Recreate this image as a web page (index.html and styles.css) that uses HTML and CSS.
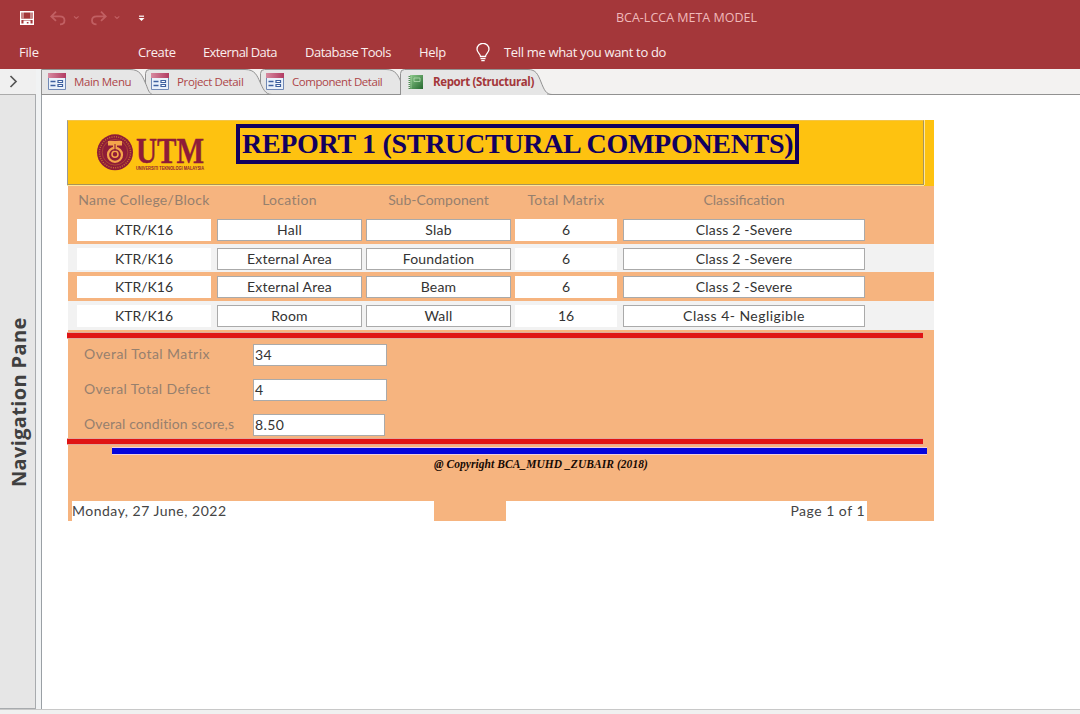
FILE: index.html
```html
<!DOCTYPE html>
<html lang="en">
<head>
<meta charset="utf-8">
<title>BCA-LCCA META MODEL</title>
<link rel="stylesheet" href="styles.css">
</head>
<body>
<header class="ribbon">
  <div class="titlebar">
    <svg class="quick" width="160" height="36" viewBox="0 0 160 36" fill="none">
      <path d="M20.700 11.700h12.600v12.600H20.700z" stroke="#fff" stroke-width="1.400"/>
      <path d="M21 18.700h12v1.300H21z" fill="#fff"/><path d="M23 11.500v7M31 11.500v7" stroke="#fff" stroke-width=".8"/>
      <path d="M23.500 20.500h7v4h-2v-2.500h-1.700v2.500h-3.300z" fill="#fff"/>
      <g stroke="#c15f62" stroke-width="1.800">
        <path d="M56 11.700l-4.700 4.700 4.700 4.500M51.500 16.400h8.200c3 0 4.800 1.600 4.800 4s-1.800 3.900-4.500 3.900"/>
        <path d="M101 11.700l4.700 4.700-4.700 4.500M105.500 16.400h-8.700c-3 0-4.800 1.600-4.800 4s1.800 3.900 4.500 3.900"/>
        <path d="M74 16.300l2.300 2.200 2.300-2.200M114.700 16.300l2.300 2.200 2.300-2.200" stroke-width="1.100"/>
      </g>
      <path d="M139 16.200h5" stroke="#fff" stroke-width="1.200"/><path d="M138.500 18h6l-3 3z" fill="#fff"/>
    </svg>
    <span class="apptitle">BCA-LCCA META MODEL</span>
  </div>
  <nav class="menu">
    <span class="m-file">File</span>
    <span class="m-create">Create</span>
    <span class="m-ext">External Data</span>
    <span class="m-db">Database Tools</span>
    <span class="m-help">Help</span>
    <svg class="bulb" width="14" height="19" viewBox="0 0 14 19" fill="none" stroke="#fff" stroke-width="1.300">
      <path d="M4.500 13.500c0-2.600-3.500-3.800-3.500-7.200a6 6 0 0 1 12 0c0 3.400-3.500 4.600-3.500 7.200zM4.500 15.600h5M5.300 17.600h3.400"/>
    </svg>
    <span class="m-tell">Tell me what you want to do</span>
  </nav>
</header>

<div class="workspace">
  <aside class="navpane">
    <div class="navhead">
      <svg width="9" height="13" viewBox="0 0 9 13" fill="none" stroke="#555" stroke-width="1.700"><path d="M1.500 1l5.500 5.500L1.500 12"/></svg>
    </div>
    <div class="navlabel"><span>Navigation Pane</span></div>
  </aside>
  <main class="document">
    <div class="tabs">
      <svg class="tabshape" width="1039" height="26" viewBox="0 0 1039 26">
        <path d="M0 26V0h1039v26" fill="#f3f2f1"/>
        <g fill="#e6e6e6" stroke="#919191">
          <path d="M219.500 21V4.500q0-4 4-4H345c10 0 12 6 15 12.500s5 12.500 12 12.500H224q-4.500 0-4.500-4.500z"/>
          <path d="M104.500 21V4.500q0-4 4-4H204c10 0 12 6 15 12.500s5 12.500 12 12.500H109q-4.500 0-4.500-4.500z"/>
          <path d="M.5 25.500V.500H89c10 0 12 6 15 12.500s3 10 7 12.500z"/>
          <path d="M0 25.500h1039" fill="none"/>
          <path d="M359.500 26V4.500q0-4 4-4H487c8 0 10 5 13 12.500s5 12.500 11 12.500"/>
        </g>
        <path d="M360 25h146v1H360z" fill="#e6e6e6"/>
      </svg>
      <svg width="0" height="0" class="defs"><defs>
        <linearGradient id="pink" x2="1"><stop stop-color="#d78aa0"/><stop offset="1" stop-color="#b23b62"/></linearGradient>
        <linearGradient id="green" x2="1" y2="1"><stop stop-color="#8cc98a"/><stop offset="1" stop-color="#25692f"/></linearGradient>
        <symbol id="form" viewBox="0 0 18 17">
          <path d="M.5.500h17v16H.500z" fill="#eaf1fa" stroke="#7189b5"/><path d="M0 0h18v5H0z" fill="url(#pink)"/>
          <path d="M2.500 8.500h5M2.500 12.500h5" stroke="#3e609f" stroke-width="1.300"/>
          <path d="M10 7.500h4.500v2H10zM10 11.500h4.500v2H10z" fill="#fff" stroke="#3e609f" stroke-width="1.200"/>
        </symbol>
      </defs></svg>
      <div class="tab t1"><svg width="18" height="17"><use href="#form"/></svg><span>Main Menu</span></div>
      <div class="tab t2"><svg width="18" height="17"><use href="#form"/></svg><span>Project Detail</span></div>
      <div class="tab t3"><svg width="18" height="17"><use href="#form"/></svg><span>Component Detail</span></div>
      <div class="tab t4"><svg width="15" height="15" viewBox="0 0 15 15"><path d="M2 0h13v14H2z" fill="url(#green)"/><path d="M6 3h6v3.500H6z" fill="none" stroke="#b5dcb2" stroke-width=".8"/><path d="M1.500 1v13" stroke="#4c8b50" stroke-width="2" stroke-dasharray="1 1"/><path d="M3 .500v13" stroke="#b9dfb5" stroke-width=".6"/></svg><span>Report (Structural)</span></div>
    </div>

    <div class="canvas">
      <article class="report">
        <div class="banner">
          <div class="frame">
            <svg class="logo" width="110" height="42" viewBox="0 0 110 42">
              <circle cx="18" cy="18.300" r="18" fill="#8e1c38"/>
              <circle cx="18" cy="18.300" r="15.500" fill="none" stroke="#c4702f" stroke-width="1.500" stroke-dasharray="1 1.300"/>
              <circle cx="18" cy="18.300" r="12.800" fill="none" stroke="#c4702f" stroke-width=".5"/>
              <path d="M11 7h14v4.500h-5V15h-4v-3.500h-5z" fill="#f5a54b"/>
              <circle cx="18" cy="20.800" r="7" fill="none" stroke="#f5a54b" stroke-width="2.200"/>
              <circle cx="18" cy="20.300" r="3" fill="none" stroke="#f5a54b" stroke-width="1.600"/>
              <path d="M18 10v7" stroke="#8e1c38"/>
              <text class="utm" x="39" y="29" textLength="68" lengthAdjust="spacingAndGlyphs">UTM</text>
              <text class="utmsub" x="39" y="35.500" textLength="68" lengthAdjust="spacingAndGlyphs">UNIVERSITI TEKNOLOGI MALAYSIA</text>
            </svg>
            <h1><span>REPORT 1 (STRUCTURAL COMPONENTS)</span></h1>
          </div>
        </div>
        <div class="row heads"><span class="h1st">Name College/Block</span><span>Location</span><span class="tight">Sub-Component</span><span class="h4th">Total Matrix</span><span class="tight">Classification</span></div>
        <div class="row data"><span class="flat">KTR/K16</span><span>Hall</span><span>Slab</span><span class="flat">6</span><span>Class 2 -Severe</span></div>
        <div class="row data alt"><span class="flat">KTR/K16</span><span>External Area</span><span>Foundation</span><span class="flat">6</span><span>Class 2 -Severe</span></div>
        <div class="row data"><span class="flat">KTR/K16</span><span>External Area</span><span>Beam</span><span class="flat">6</span><span>Class 2 -Severe</span></div>
        <div class="row data alt"><span class="flat">KTR/K16</span><span>Room</span><span>Wall</span><span class="flat">16</span><span class="wide">Class 4- Negligible</span></div>
        <div class="rule red first"></div>
        <div class="totals">
          <span class="l1">Overal Total Matrix</span><b>34</b>
          <span class="l2">Overal Total Defect</span><b>4</b>
          <span class="l3">Overal condition score,s</span><b class="short">8.50</b>
        </div>
        <div class="rule red"></div>
        <div class="rule blue"></div>
        <p class="copyright"><span>@ Copyright BCA_MUHD _ZUBAIR (2018)</span></p>
        <footer class="pagefoot"><span class="date">Monday, 27 June, 2022</span><span class="page">Page 1 of 1</span></footer>
      </article>
    </div>
  </main>
</div>
<div class="statusbar"></div>
</body>
</html>
```
FILE: styles.css
```css
* { box-sizing: border-box; }
body { margin: 0; width: 1080px; height: 714px; overflow: hidden; display: flex; flex-direction: column; background: #fff; font-family: "Open Sans", "Noto Sans", sans-serif; }
span { white-space: nowrap; }

.ribbon { height: 69px; background: #a4373a; color: #fbeeee; flex: none; }
.titlebar { height: 36px; display: flex; }
.quick { margin-right: 456px; flex: none; }
.apptitle { font-size: 12.5px; line-height: 36px; color: #f0b9ba; letter-spacing: 0; }
.menu { height: 33px; display: flex; font-size: 13px; line-height: 33px; padding-left: 19px; }
.m-file { width: 119px; letter-spacing: -.2px; }
.m-create { width: 65px; letter-spacing: -.4px; }
.m-ext { width: 102px; letter-spacing: -.6px; }
.m-db { width: 114px; letter-spacing: -.5px; }
.m-help { width: 57px; letter-spacing: -.3px; }
.bulb { margin: 7px 14px 0 0; }
.m-tell { letter-spacing: -.33px; }

.workspace { height: 640px; flex: none; display: flex; background: #f1f3f4; }
.navpane { width: 36px; border-right: 1px solid #a8abae; border-bottom: 1px solid #a8abae; background: #e6e6e6; display: flex; flex-direction: column; }
.navhead { height: 26px; background: #f0f0f0; border-bottom: 1px solid #ababab; padding: 6px 0 0 9px; flex: none; margin-right: -1px; }
.navhead svg { display: block; }
.navlabel { flex: 1; display: flex; padding: 217px 0 0 4px; }
.navlabel span { writing-mode: vertical-rl; transform: rotate(180deg); height: 175px; width: 30px; line-height: 30px; font-size: 20px; font-weight: 700; color: #404040; letter-spacing: .35px; }
.document { margin-left: 5px; width: 1039px; border-left: 1px solid #9aa0a5; background: #fff; }
.tabs { height: 26px; display: flex; position: relative; margin-left: -1px; }
.tabshape { position: absolute; left: 0; top: 0; }
.defs { position: absolute; }
.tab { position: relative; display: flex; align-items: flex-start; color: #ad4548; font-size: 11.5px; line-height: 26px; padding-left: 7px; letter-spacing: -.37px; }
.tab svg { margin: 4px 8px 0 0; flex: none; }
.t1 { width: 103px; }
.t2 { width: 115px; }
.t3 { width: 142px; letter-spacing: -.45px; }
.t4 { font-weight: 700; color: #a4373a; }
.t4 svg { margin: 6px 10px 0 0; }

.canvas { padding: 25px 0 0 25px; }
.report { width: 867px; height: 401px; background: linear-gradient(90deg, #fff 1px, #f6b47f 1px); font-family: Lato, "Open Sans", sans-serif; }
.banner { height: 66px; background: #fec210; }
.frame { width: 857px; height: 65px; border: 1px solid #f3c548; border-right: 1px solid #a99558; border-bottom-color: #a99558; border-left-color: #999; box-shadow: 0 1px #ffe79a, 1px 0 #ffe79a; display: flex; }
.logo { margin: 13px 29px 0 29px; flex: none; overflow: visible; }
.utm { font: 700 35px "Liberation Serif", serif; fill: #8e1c38; stroke: #8e1c38; stroke-width: .4; }
.utmsub { font: 700 4.500px "Liberation Sans", sans-serif; fill: #8e1c38; }
h1 { margin: 3px 0 0; width: 563px; height: 40px; border: 4px solid #12005e; color: #12005e; font: 700 28px/32px "Liberation Serif", serif; padding-left: 2px; letter-spacing: -.3px; }

.row { display: grid; grid-template-columns: 136px 145px 145px 104px 242px; column-gap: 4px; padding-left: 9px; margin-left: 1px; text-align: center; font-size: 14px; letter-spacing: .3px; }
.heads { height: 29px; color: #96806e; line-height: 27px; }
.heads .tight { letter-spacing: 0; }
.h1st, .h4th { margin-right: 2px; }
.data { height: 28.700px; padding-top: 4px; color: #333; }
.data span { height: 22px; line-height: 20px; background: #fff; border: 1px solid #aaa; letter-spacing: .2px; }
.data .flat { border-color: #fff; margin-right: 2px; letter-spacing: 0; }
.data .wide { letter-spacing: .45px; }
.alt { background: #f2f2f2; }
.rule { border: solid #e2a99a; border-width: 1px 0; }
.red { width: 856px; height: 7px; background: #df1414; }
.first { margin-top: 2px; }
.totals { display: grid; grid-template-columns: 169px 134px; grid-template-rows: 35px 35px 24px; height: 94px; margin-top: 5px; padding-left: 17px; font-size: 14px; line-height: 20px; }
.totals span { color: #96806e; }
.totals b { font-weight: 400; height: 22px; border: 1px solid #aaa; background: #fff; color: #333; padding-left: 1px; letter-spacing: .4px; }
.totals .short { width: 132px; }
.l1 { letter-spacing: .45px; }
.l2 { letter-spacing: .4px; }
.l3 { letter-spacing: .1px; }
.blue { width: 815px; height: 8px; margin: 2px 0 0 45px; background: #0505dc; border-color: #efd2df; }
.copyright { margin: 0; height: 46px; padding: 2px 0 0 367px; font: italic 700 11.5px/15px "Liberation Serif", serif; color: #160a04; letter-spacing: .05px; }
.pagefoot { height: 20px; display: flex; gap: 72px; padding-left: 5px; font-size: 14px; line-height: 19px; color: #444; }
.pagefoot span { background: #fff; height: 20px; letter-spacing: .5px; }
.date { width: 362px; }
.page { width: 361px; text-align: right; padding-right: 2px; }
.statusbar { flex: 1; background: #f0f0f0; border-top: 1px solid #c8c8c8; }
```
